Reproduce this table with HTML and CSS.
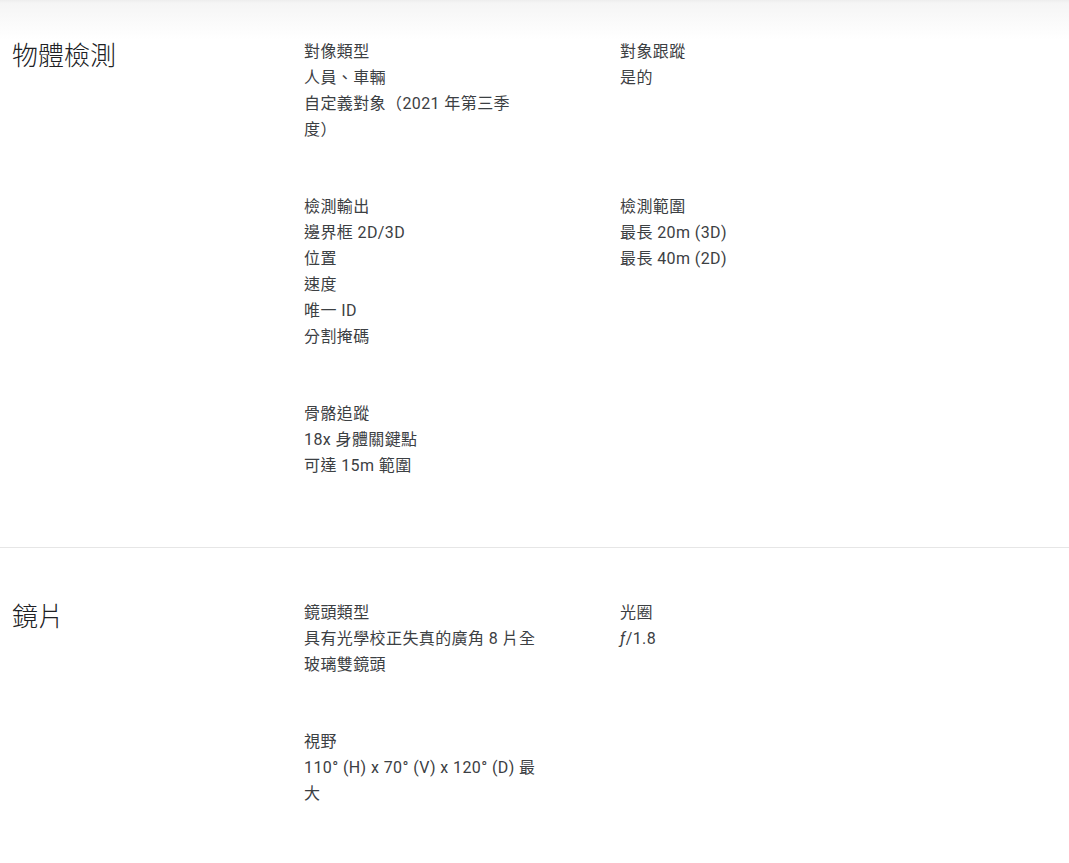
FILE: index.html
```html
<!DOCTYPE html>
<html lang="zh-Hant">
<head>
<meta charset="utf-8">
<title>規格</title>
<link rel="stylesheet" href="styles.css">
</head>
<body>
<main class="page">
  <section class="spec spec-first">
    <h2 class="spec-title">物體檢測</h2>
    <div class="spec-grid">
      <div class="item">
        <div class="item-label">對像類型</div>
        <div class="item-value">人員、車輛</div>
        <div class="item-value">自定義對象（2021 年第三季度）</div>
      </div>
      <div class="item">
        <div class="item-label">對象跟蹤</div>
        <div class="item-value">是的</div>
      </div>
      <div class="item">
        <div class="item-label">檢測輸出</div>
        <div class="item-value">邊界框 2D/3D</div>
        <div class="item-value">位置</div>
        <div class="item-value">速度</div>
        <div class="item-value">唯一 ID</div>
        <div class="item-value">分割掩碼</div>
      </div>
      <div class="item">
        <div class="item-label">檢測範圍</div>
        <div class="item-value">最長 20m (3D)</div>
        <div class="item-value">最長 40m (2D)</div>
      </div>
      <div class="item">
        <div class="item-label">骨骼追蹤</div>
        <div class="item-value">18x 身體關鍵點</div>
        <div class="item-value">可達 15m 範圍</div>
      </div>
    </div>
  </section>
  <section class="spec spec-second">
    <h2 class="spec-title">鏡片</h2>
    <div class="spec-grid">
      <div class="item">
        <div class="item-label">鏡頭類型</div>
        <div class="item-value">具有光學校正失真的廣角 8 片全玻璃雙鏡頭</div>
      </div>
      <div class="item">
        <div class="item-label">光圈</div>
        <div class="item-value"><span class="fnum">ƒ</span>/1.8</div>
      </div>
      <div class="item">
        <div class="item-label">視野</div>
        <div class="item-value">110° (H) x 70° (V) x 120° (D) 最大</div>
      </div>
    </div>
  </section>
</main>
</body>
</html>
```

FILE: styles.css
```css
html, body {
  margin: 0;
  padding: 0;
  background: #fff;
}

body {
  font-family: Roboto, "Noto Sans CJK TC", sans-serif;
  color: #3c4043;
  background: linear-gradient(to bottom, #ededed 0, #f5f5f5 3px, #ffffff 40px) no-repeat;
  background-size: 100% 40px;
}

.page {
  width: 1069px;
}

.spec {
  display: grid;
  grid-template-columns: 292px 1fr;
  padding-left: 12px;
}

.spec-first {
  padding-top: 39px;
  padding-bottom: 68px;
  border-bottom: 1px solid #e6e6e6;
}

.spec-second {
  padding-top: 52px;
  padding-bottom: 40px;
}

.spec-title {
  margin: 0;
  font-size: 26px;
  line-height: 34px;
  font-weight: 300;
  color: #202124;
}

.spec-grid {
  display: grid;
  grid-template-columns: 234px 234px;
  column-gap: 82px;
  row-gap: 51px;
  align-items: start;
}

.item {
  font-size: 16px;
  line-height: 26px;
  font-weight: 400;
  letter-spacing: 0.4px;
  text-spacing-trim: space-all;
}

.item-label,
.item-value {
  margin: 0;
}

.fnum {
  font-style: italic;
}
```
